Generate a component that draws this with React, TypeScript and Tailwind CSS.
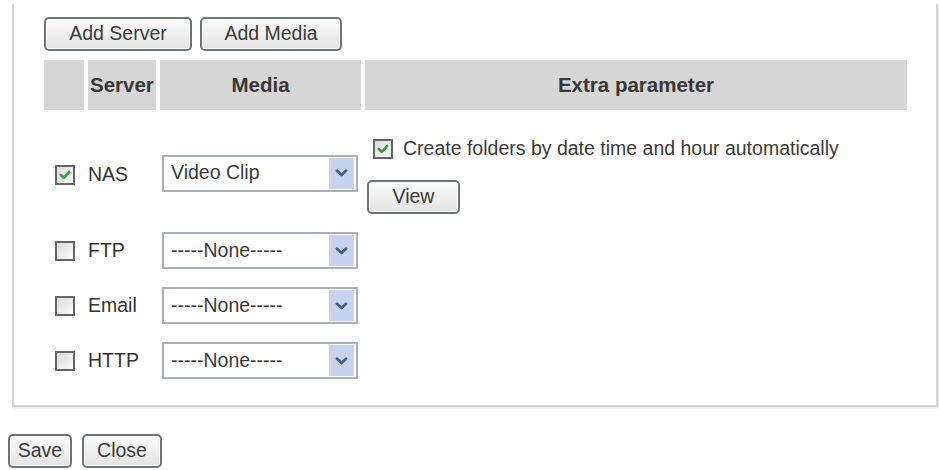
import React from 'react';

const font = { fontFamily: '"Liberation Sans", Arial, sans-serif' };

const Btn: React.FC<{ label: string; w: string }> = ({ label, w }) => (
  <button
    className={`${w} h-[34px] rounded-[5px] border-2 border-[#6f7378] bg-gradient-to-b from-[#fbfbfb] to-[#e3e3e3] text-[19.5px] leading-none text-[#3a3a3a] shadow-[inset_0_0_0_1px_#ffffff]`}
  >
    {label}
  </button>
);

const Check: React.FC<{ checked?: boolean }> = ({ checked }) => (
  <span className="flex h-[20px] w-[20px] items-center justify-center border-2 border-[#666] bg-gradient-to-br from-[#dcdcdc] to-[#f8f8f8]">
    {checked && (
      <svg width="12" height="10" viewBox="0 0 12 10">
        <path d="M1.8 5 L4.8 7.8 L10.2 2" fill="none" stroke="#3c9b3c" strokeWidth="2.6" strokeLinecap="round" strokeLinejoin="round" />
      </svg>
    )}
  </span>
);

const Select: React.FC<{ value: string }> = ({ value }) => (
  <div className="ml-[2px] flex h-[37px] w-[196px] items-center border-2 border-[#a9afb8] bg-white pl-[7px] pr-[2px]">
    <span className="flex-1 text-[19.5px] text-[#3a3a3a]">{value}</span>
    <span className="flex h-[31px] w-[25px] items-center justify-center bg-[#c7d3ee]">
      <svg width="13" height="8" viewBox="0 0 13 8">
        <path d="M2 1.8 L6.5 6 L11 1.8" fill="none" stroke="#4a5b86" strokeWidth="2.8" strokeLinecap="round" strokeLinejoin="round" />
      </svg>
    </span>
  </div>
);

const rows = [
  { name: 'FTP', value: '-----None-----' },
  { name: 'Email', value: '-----None-----' },
  { name: 'HTTP', value: '-----None-----' },
];

export default function App() {
  return (
    <div className="min-h-[470px] w-[940px] bg-white" style={font}>
      <div className="ml-[12px] mt-[4px] w-[926px] border-2 border-t-0 border-[#d3d3d3] pb-[26px] pl-[30px] shadow-[1px_1px_2px_#e6e6e6]">
        <div className="flex gap-[8px] pt-[13px]">
          <Btn label="Add Server" w="w-[148px]" />
          <Btn label="Add Media" w="w-[142px]" />
        </div>

        {/* header */}
        <div className="mt-[9px] flex h-[50px] gap-[4px] text-[20.5px] font-bold text-[#383838]">
          <div className="w-[40px] bg-[#d6d6d6]" />
          <div className="flex w-[68px] items-center bg-[#d6d6d6] pl-[2px]">Server</div>
          <div className="flex w-[201px] items-center justify-center bg-[#d6d6d6]">Media</div>
          <div className="flex w-[542px] items-center justify-center bg-[#d6d6d6]">Extra parameter</div>
        </div>

        {/* NAS */}
        <div className="mt-[22px] flex h-[82px] items-center gap-[4px] text-[19.5px] text-[#333]">
          <div className="flex w-[40px] justify-center pl-[1px] pt-[3px]"><Check checked /></div>
          <div className="w-[68px] pt-[3px]">NAS</div>
          <div className="w-[201px]"><Select value="Video Clip" /></div>
          <div className="flex h-full w-[542px] flex-col pl-[2px] pt-[5px]">
            <div className="flex h-[24px] items-center gap-[10px] pl-[6px]">
              <Check checked />
              <span className="text-[19.5px] text-[#3a3a3a]">Create folders by date time and hour automatically</span>
            </div>
            <div className="mt-[19px]">
              <Btn label="View" w="w-[93px]" />
            </div>
          </div>
        </div>

        {rows.map((r) => (
          <div key={r.name} className="mt-[18px] flex h-[37px] items-center gap-[4px] text-[19.5px] text-[#333]">
            <div className="flex w-[40px] justify-center pl-[1px]"><Check /></div>
            <div className="w-[68px]">{r.name}</div>
            <div className="w-[201px]"><Select value={r.value} /></div>
          </div>
        ))}
      </div>

      <div className="ml-[8px] mt-[27px] flex gap-[10px]">
        <Btn label="Save" w="w-[64px]" />
        <Btn label="Close" w="w-[80px]" />
      </div>
    </div>
  );
}
